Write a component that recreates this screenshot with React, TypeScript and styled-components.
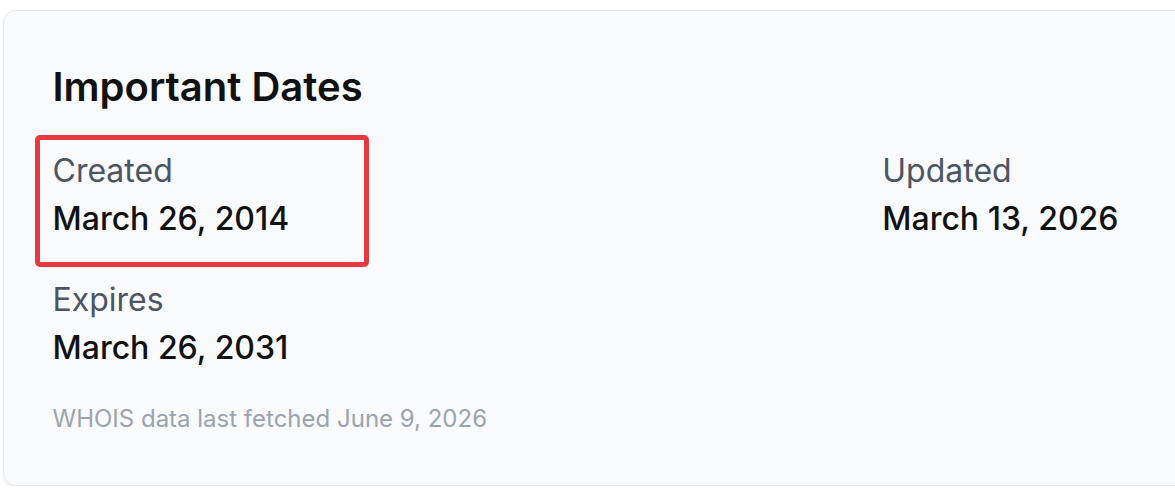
import React from "react";
import styled, { createGlobalStyle } from "styled-components";

interface DateEntry {
  label: string;
  value: string;
  marked?: boolean;
}

const dates: DateEntry[] = [
  { label: "Created", value: "March 26, 2014", marked: true },
  { label: "Updated", value: "March 13, 2026" },
  { label: "Expires", value: "March 26, 2031" },
];

const GlobalStyle = createGlobalStyle`
  html, body {
    margin: 0;
    background: #ffffff;
    overflow: hidden;
  }
  body {
    font-family: Inter, "Noto Sans", "Liberation Sans", sans-serif;
    -webkit-font-smoothing: antialiased;
  }
`;

const Page = styled.div`
  padding: 10px 0 0 3px;
  width: 1800px;
`;

const Card = styled.section`
  width: 1712px;
  box-sizing: border-box;
  padding: 52px 48px 49px 48.5px;
  background: #f8fafc;
  border: 1.5px solid #e5e7eb;
  border-radius: 13px;
  box-shadow: 0 1.5px 3px rgba(0, 0, 0, 0.05);
`;

const Title = styled.h2`
  margin: 0 0 39px;
  font-size: 40px;
  line-height: 48px;
  font-weight: 600;
  color: #111111;
`;

const DateGrid = styled.div`
  display: grid;
  grid-template-columns: 1fr 1fr;
  column-gap: 46px;
  row-gap: 39.5px;
`;

const Item = styled.div`
  position: relative;
  display: flex;
  flex-direction: column;
  gap: 5.5px;
`;

const Label = styled.div`
  font-size: 32px;
  line-height: 42px;
  color: #4b5563;
`;

const Value = styled.div`
  font-size: 32px;
  line-height: 42px;
  font-weight: 500;
  color: #111111;
`;

// red frame drawn over the entry it calls out
const Marker = styled.span`
  position: absolute;
  left: -18px;
  top: -15.5px;
  width: 334px;
  height: 132px;
  box-sizing: border-box;
  border: 5px solid #e5393f;
  border-radius: 5px;
  pointer-events: none;
`;

const Fetched = styled.p`
  margin: 33.5px 0 0;
  font-size: 24px;
  line-height: 33.6px;
  color: #9ca3af;
`;

const App = () => {
  return (
    <>
      <GlobalStyle />
      <Page>
        <Card>
          <Title>Important Dates</Title>
          <DateGrid>
            {dates.map((d) => (
              <Item key={d.label}>
                <Label>{d.label}</Label>
                <Value>{d.value}</Value>
                {d.marked && <Marker />}
              </Item>
            ))}
          </DateGrid>
          <Fetched>WHOIS data last fetched June 9, 2026</Fetched>
        </Card>
      </Page>
    </>
  );
};

export default App;
